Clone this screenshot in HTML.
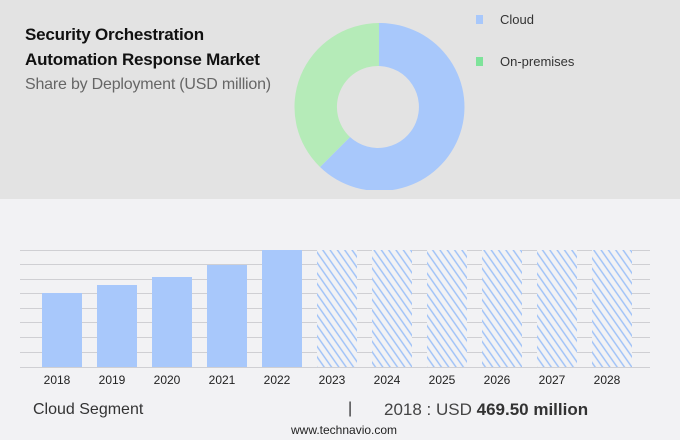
<!DOCTYPE html>
<html><head><style>
body{margin:0;width:680px;height:440px;background:#f2f2f4;font-family:"Liberation Sans",sans-serif;position:relative;overflow:hidden}
.top{position:absolute;left:0;top:0;width:680px;height:199px;background:#e3e3e3}
.t{position:absolute;left:25px;font-weight:bold;font-size:17px;color:#111;letter-spacing:-0.2px}
.a{position:absolute;font-size:13px;color:#333}
</style></head><body>
<div class="top"></div>
<div class="t" style="top:25px">Security Orchestration</div>
<div class="t" style="top:50px">Automation Response Market</div>
<div style="position:absolute;left:25px;top:76px;font-size:16px;color:#666;letter-spacing:-0.2px">Share by Deployment (USD million)</div>
<svg style="position:absolute;left:0;top:0" width="680" height="440">
<defs><pattern id="h" width="6" height="6" patternUnits="userSpaceOnUse" patternTransform="rotate(-35)"><rect width="6" height="6" fill="#f2f2f4"/><line x1="1" y1="0" x2="1" y2="6" stroke="#9cc0f8" stroke-width="1.4"/></pattern>
<clipPath id="c"><rect x="0" y="0" width="680" height="190"/></clipPath></defs>
<g clip-path="url(#c)">
<path d="M379,23 A85,84 0 1 1 320,167 L350,137 A41,41 0 1 0 379,66 Z" fill="#a8c8fb"/>
<path d="M320,167 A85,84 0 0 1 379,23 L379,66 A41,41 0 0 0 350,137 Z" fill="#b5ebb8"/>
</g>
<rect x="476" y="15" width="7" height="9" fill="#a8c8fb"/>
<rect x="476" y="57" width="7" height="9" fill="#7ee39a"/>
<g stroke="#cfcfd3" stroke-width="1">
<line x1="20" x2="650" y1="250.5" y2="250.5"/><line x1="20" x2="650" y1="264.5" y2="264.5"/><line x1="20" x2="650" y1="279.5" y2="279.5"/><line x1="20" x2="650" y1="293.5" y2="293.5"/><line x1="20" x2="650" y1="308.5" y2="308.5"/><line x1="20" x2="650" y1="322.5" y2="322.5"/><line x1="20" x2="650" y1="337.5" y2="337.5"/><line x1="20" x2="650" y1="352.5" y2="352.5"/><line x1="20" x2="650" y1="367.5" y2="367.5"/>
</g>
<g fill="#a8c8fb">
<rect x="42" y="293" width="40" height="74"/><rect x="97" y="285" width="40" height="82"/><rect x="152" y="277" width="40" height="90"/><rect x="207" y="265" width="40" height="102"/><rect x="262" y="250" width="40" height="117"/>
</g>
<g fill="url(#h)">
<rect x="317" y="250" width="40" height="117"/><rect x="372" y="250" width="40" height="117"/><rect x="427" y="250" width="40" height="117"/><rect x="482" y="250" width="40" height="117"/><rect x="537" y="250" width="40" height="117"/><rect x="592" y="250" width="40" height="117"/>
</g>
<g font-size="12" fill="#222" text-anchor="middle" font-family="Liberation Sans">
<text x="57" y="384">2018</text><text x="112" y="384">2019</text><text x="167" y="384">2020</text><text x="222" y="384">2021</text><text x="277" y="384">2022</text><text x="332" y="384">2023</text><text x="387" y="384">2024</text><text x="442" y="384">2025</text><text x="497" y="384">2026</text><text x="552" y="384">2027</text><text x="607" y="384">2028</text>
</g>
</svg>
<div class="a" style="left:500px;top:12px">Cloud</div>
<div class="a" style="left:500px;top:54px">On-premises</div>
<div style="position:absolute;left:33px;top:401px;font-size:16px;color:#333">Cloud Segment</div>
<div style="position:absolute;left:348px;top:400px;font-size:16px;color:#333">|</div>
<div style="position:absolute;left:384px;top:400px;font-size:17px;color:#444">2018 : USD <b style="color:#333">469.50 million</b></div>
<div style="position:absolute;left:291px;top:423px;font-size:12px;color:#222">www.technavio.com</div>
</body></html>
